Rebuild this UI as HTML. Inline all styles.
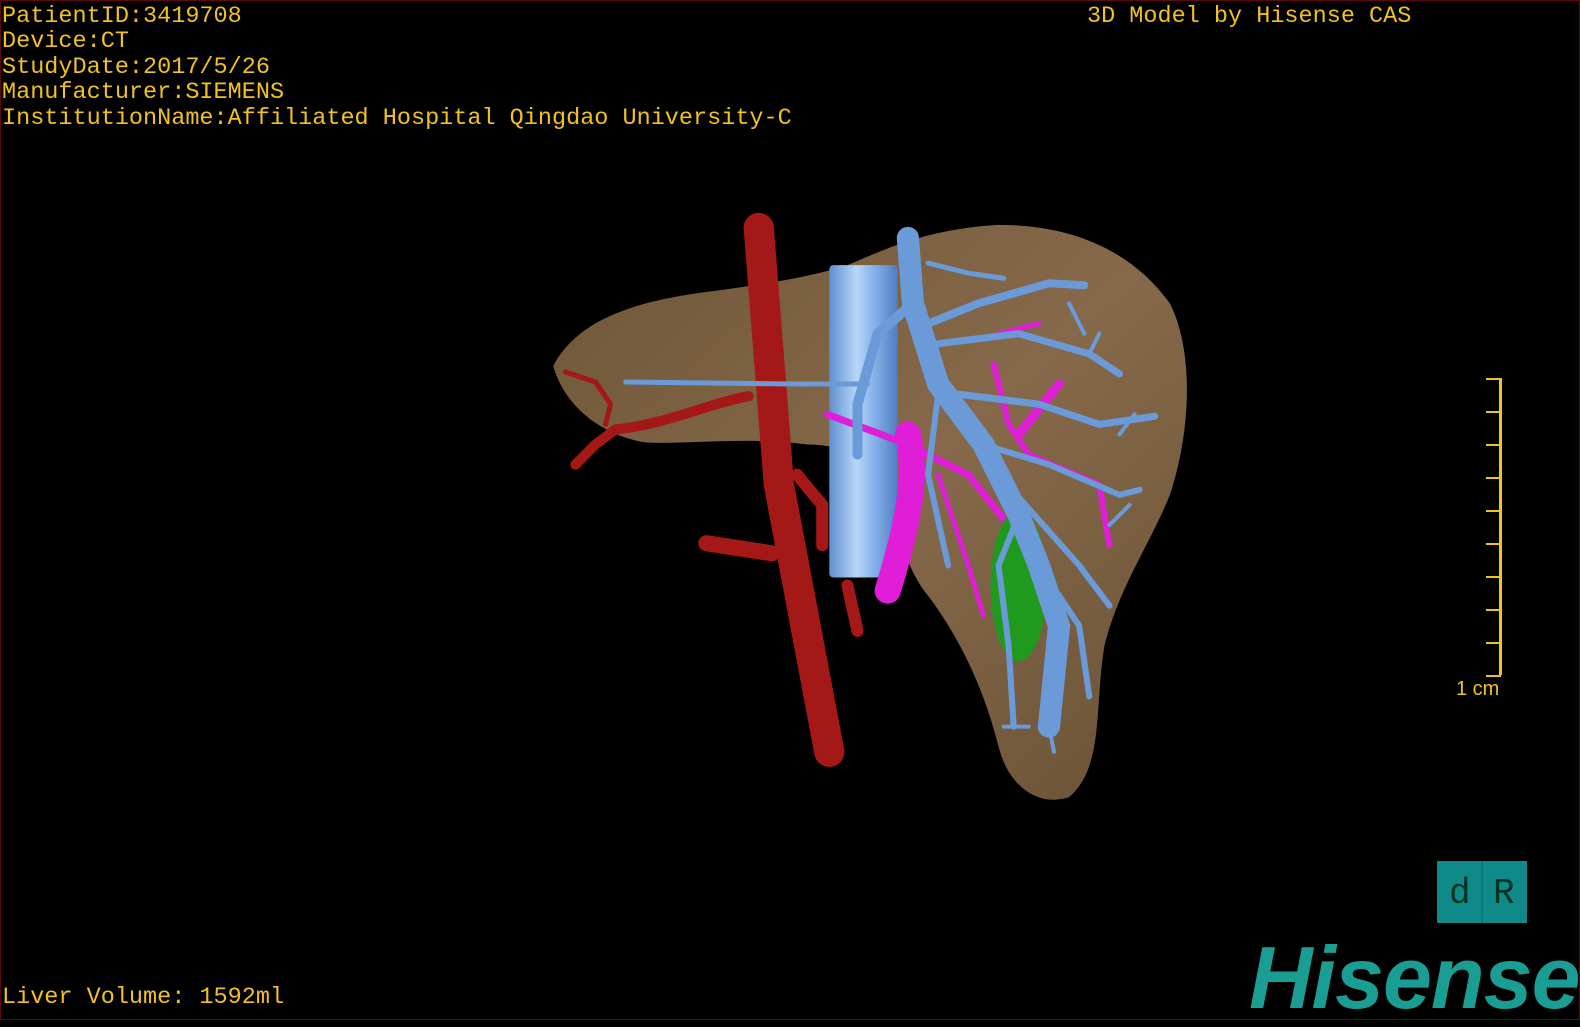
<!DOCTYPE html>
<html><head><meta charset="utf-8"><style>
html,body{margin:0;padding:0;background:#000;}
body{width:1580px;height:1020px;position:relative;overflow:hidden;box-sizing:border-box;border:1px solid #5a0a0a;}
.t{position:absolute;color:#f2c21e;font-family:"Liberation Mono",monospace;font-size:23.5px;line-height:25.4px;white-space:pre;letter-spacing:0px;}
svg{position:absolute;left:0;top:0;}
</style></head><body>
<svg width="1580" height="1020" viewBox="0 0 1568 1012">
<defs>
<linearGradient id="lv" x1="0" y1="0" x2="1" y2="1"><stop offset="0" stop-color="#6e5638"/><stop offset="0.5" stop-color="#86694a"/><stop offset="1" stop-color="#6a5236"/></linearGradient>
<linearGradient id="ivc" x1="0" y1="0" x2="1" y2="0"><stop offset="0" stop-color="#5f8fd0"/><stop offset="0.4" stop-color="#b8d6f8"/><stop offset="0.7" stop-color="#7eaae6"/><stop offset="1" stop-color="#4f7cc0"/></linearGradient>
</defs>
<path d="M548 362 C570 320 620 300 690 290 C750 282 800 275 840 262 C880 245 920 226 990 222 C1060 222 1120 245 1160 300 C1185 350 1180 430 1160 490 C1140 540 1110 580 1095 640 C1085 700 1095 760 1060 790 C1030 800 1000 780 990 740 C975 680 950 630 920 590 C895 560 885 510 880 470 C860 450 830 440 800 440 C740 432 680 440 640 438 C600 432 560 405 548 362 Z" fill="url(#lv)"/>
<g stroke="#a51818" fill="none" stroke-linecap="round">
<path d="M752 225 L772 480 L822 745" stroke-width="30"/>
<path d="M742 392 C700 400 660 420 610 425 L590 440 L570 460" stroke-width="10"/>
<path d="M600 420 L605 400 L590 378 L560 368" stroke-width="5"/>
<path d="M700 538 L765 548" stroke-width="16"/>
<path d="M790 470 L815 500 L815 540" stroke-width="12"/>
<path d="M840 580 L850 625" stroke-width="12"/>
</g>
<rect x="822" y="262" width="68" height="310" rx="4" fill="url(#ivc)"/>
<g stroke="#e01ed8" fill="none" stroke-linecap="round">
<path d="M900 430 C910 470 900 520 880 585" stroke-width="26"/>
<path d="M820 410 L900 440 L960 470 L1000 520" stroke-width="7"/>
<path d="M930 470 L960 560 L975 610" stroke-width="5"/>
<path d="M985 360 L1000 420 L1020 450 L1090 480 L1100 540" stroke-width="6"/>
<path d="M1050 380 L1010 430" stroke-width="9"/>
<path d="M990 330 L1030 320" stroke-width="5"/>
</g>
<ellipse cx="1010" cy="580" rx="28" ry="75" fill="#1f9a1f"/>
<g stroke="#6a9ad8" fill="none" stroke-linecap="round">
<path d="M900 235 L905 300 L930 380 L975 440 L1010 510 L1030 560 L1050 620 L1040 720" stroke-width="22"/>
<path d="M905 300 L870 330 L850 400 L850 450" stroke-width="10"/>
<path d="M920 320 L970 300 L1040 280 L1075 282" stroke-width="8"/>
<path d="M930 340 L1010 330 L1080 350 L1110 370" stroke-width="7"/>
<path d="M950 390 L1030 400 L1090 420 L1145 412" stroke-width="7"/>
<path d="M975 440 L1040 460 L1110 490 L1130 485" stroke-width="6"/>
<path d="M990 470 L1070 560 L1100 600" stroke-width="6"/>
<path d="M1030 560 L1070 620 L1080 690" stroke-width="6"/>
<path d="M1010 510 L990 560 L1000 640 L1005 720" stroke-width="6"/>
<path d="M860 380 L790 380 L620 378" stroke-width="5"/>
<path d="M930 390 L920 470 L940 560" stroke-width="6"/>
<path d="M920 260 L960 270 L995 275" stroke-width="5"/>
<path d="M1020 720 L995 720 M1040 720 L1045 745" stroke-width="4"/>
<path d="M1060 300 L1075 330 M1080 350 L1090 330 M1110 430 L1125 410 M1100 520 L1120 500" stroke-width="4"/>
</g>
</svg>
<div class="t" style="left:1px;top:3px">PatientID:3419708
Device:CT
StudyDate:2017/5/26
Manufacturer:SIEMENS
InstitutionName:Affiliated Hospital Qingdao University-C</div>
<div class="t" style="left:1086px;top:3px">3D Model by Hisense CAS</div>
<div class="t" style="left:1px;top:984px">Liver Volume: 1592ml</div>
<div style="position:absolute;left:1498px;top:377px;width:3px;height:297px;background:#f2c21e"></div>
<div style="position:absolute;left:1485px;top:377px;width:15px;height:300px;background:repeating-linear-gradient(#f2c21e 0 2px,transparent 2px 33px)"></div>
<div style="position:absolute;left:1455px;top:677px;color:#f2c21e;font:20px 'Liberation Sans',sans-serif;">1 cm</div>
<div style="position:absolute;left:1436px;top:860px;width:90px;height:62px;background:#0f8a88;"><div style="position:absolute;left:44px;top:0;width:2px;height:62px;background:#0a7876"></div>
<span style="position:absolute;left:12px;top:12px;font:36px 'Liberation Mono',monospace;color:#032">d</span><span style="position:absolute;left:56px;top:12px;font:36px 'Liberation Mono',monospace;color:#032">R</span></div>
<div style="position:absolute;left:1248px;top:932px;color:#1a9e94;font:italic bold 88px 'Liberation Sans',sans-serif;letter-spacing:-1px;line-height:90px;">Hisense</div>
</body></html>
